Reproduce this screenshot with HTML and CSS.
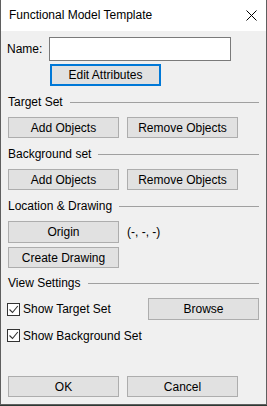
FILE: index.html
```html
<!DOCTYPE html>
<html>
<head>
<meta charset="utf-8">
<link rel="stylesheet" href="styles.css">
</head>
<body>
<div class="window">
  <div class="titlebar">
    <span class="title">Functional Model Template</span>
    <svg class="close" width="11" height="11" viewBox="0 0 11 11"><path d="M0.5 0.5 L10.5 10.5 M10.5 0.5 L0.5 10.5" stroke="#000" stroke-width="1" fill="none"/></svg>
  </div>
  <div class="content">
    <div class="name-row">
      <span class="name-label">Name:</span>
      <div class="name-input"></div>
    </div>
    <div class="edit-row"><div class="btn btn-focus">Edit Attributes</div></div>

    <div class="section"><span class="section-title">Target Set</span><div class="rule"></div></div>
    <div class="btn-row"><div class="btn">Add Objects</div><div class="btn">Remove Objects</div></div>

    <div class="section"><span class="section-title">Background set</span><div class="rule"></div></div>
    <div class="btn-row"><div class="btn">Add Objects</div><div class="btn">Remove Objects</div></div>

    <div class="section"><span class="section-title">Location &amp; Drawing</span><div class="rule"></div></div>
    <div class="btn-row origin-row"><div class="btn btn-tall">Origin</div><span class="coords">(-, -, -)</span></div>
    <div class="btn-row drawing-row"><div class="btn">Create Drawing</div></div>

    <div class="section"><span class="section-title">View Settings</span><div class="rule"></div></div>
    <div class="check-row first">
      <div class="check-item">
        <span class="checkbox"><svg width="11" height="11" viewBox="0 0 11 11"><path d="M1.5 5.5 L4.5 8.5 L9.8 2" stroke="#333" stroke-width="1.1" fill="none"/></svg></span>
        <span>Show Target Set</span>
      </div>
      <div class="btn btn-tall">Browse</div>
    </div>
    <div class="check-row second">
      <div class="check-item">
        <span class="checkbox"><svg width="11" height="11" viewBox="0 0 11 11"><path d="M1.5 5.5 L4.5 8.5 L9.8 2" stroke="#333" stroke-width="1.1" fill="none"/></svg></span>
        <span>Show Background Set</span>
      </div>
    </div>

    <div class="btn-row footer"><div class="btn">OK</div><div class="btn">Cancel</div></div>
  </div>
</div>
</body>
</html>
```

FILE: styles.css
```css
* { box-sizing: border-box; }
html, body {
  margin: 0;
  padding: 0;
  background: #2c3a34;
}
body {
  font-family: "Liberation Sans", Arial, sans-serif;
  font-size: 12px;
  color: #000;
}
.window {
  width: 267px;
  height: 405px;
  background: #f0f0f0;
  border-left: 1px solid #5f5f5f;
  border-right: 1px solid #5f5f5f;
  border-bottom: 1px solid #5f5f5f;
  display: flex;
  flex-direction: column;
}
.titlebar {
  height: 31px;
  background: #fff;
  display: flex;
  align-items: center;
  justify-content: space-between;
  padding: 0 9px 1px 8px;
  flex: none;
}
.title {
  font-size: 12px;
}
.close {
  display: block;
}
.content {
  flex: 1;
  display: flex;
  flex-direction: column;
  padding: 0 7px 0 7px;
}
.name-row {
  margin-top: 6px;
  height: 24px;
  display: flex;
  align-items: center;
}
.name-label {
  width: 42px;
  margin-left: -1px;
}
.name-input {
  width: 182px;
  height: 24px;
  background: #fff;
  border: 1px solid #7a7a7a;
}
.edit-row {
  margin-top: 3px;
  padding-left: 42px;
  display: flex;
}
.btn {
  width: 111px;
  height: 21px;
  background: #e1e1e1;
  border: 1px solid #adadad;
  display: flex;
  align-items: center;
  justify-content: center;
  flex: none;
}
.btn-focus {
  height: 22px;
  border: 2px solid #0078d7;
}
.btn-tall {
  height: 22px;
}
.section {
  margin-top: 9px;
  height: 14px;
  display: flex;
  align-items: center;
  gap: 7px;
}
.section-title {
  white-space: nowrap;
}
.rule {
  flex: 1;
  height: 1px;
  background: #a0a0a0;
  margin-top: 1px;
}
.btn-row {
  margin-top: 8px;
  display: flex;
  align-items: center;
  gap: 8px;
}
.origin-row { margin-top: 8px; }
.drawing-row { margin-top: 4px; }
.drawing-row + .section { margin-top: 8px; }
.coords {
  margin-left: 0;
}
.check-row {
  display: flex;
  align-items: center;
}
.check-row.first {
  margin-top: 8px;
}
.check-row.second {
  margin-top: 8px;
}
.check-item {
  width: 140px;
  display: flex;
  align-items: center;
  gap: 3px;
  margin-left: -1px;
  margin-right: 1px;
  height: 15px;
}
.checkbox {
  width: 13px;
  height: 13px;
  border: 1px solid #333;
  background: #fff;
  display: flex;
  align-items: center;
  justify-content: center;
  flex: none;
}
.checkbox svg { display: block; }
.footer {
  margin-top: 33px;
}
```
